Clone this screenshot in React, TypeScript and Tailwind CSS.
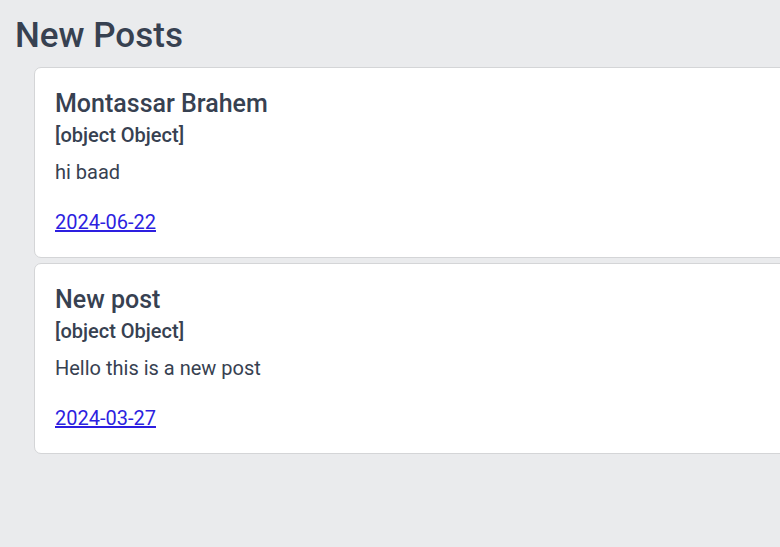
const posts = [
  { id: 1, title: "Montassar Brahem", author: "[object Object]", body: "hi baad", date: "2024-06-22" },
  { id: 2, title: "New post", author: "[object Object]", body: "Hello this is a new post", date: "2024-03-27" },
];

export default function App() {
  return (
    <div className="min-h-[547px] w-full overflow-hidden bg-[#eaebed] font-['Roboto',sans-serif] text-[#374151]">
      <h1 className="pl-[15px] pt-[14px] text-[35px] leading-[44px] font-medium">New Posts</h1>
      <div className="flex flex-col gap-[5px] pl-[34px] pt-[9px]">
        {posts.map((post) => (
          <div
            key={post.id}
            className="w-[900px] shrink-0 rounded-[7px] border border-[#d4d5d7] bg-white px-[20px] pt-[20px] pb-[21px]"
          >
            <h2 className="text-[25px] leading-[32px] font-medium">{post.title}</h2>
            <h3 className="mt-[2px] text-[20px] leading-[26px] font-medium">{post.author}</h3>
            <p className="mt-[11px] text-[20px] leading-[26px]">{post.body}</p>
            <a href="#" className="mt-[24px] inline-block text-[20px] leading-[26px] text-[#2d1fe0] underline">
              {post.date}
            </a>
          </div>
        ))}
      </div>
    </div>
  );
}
